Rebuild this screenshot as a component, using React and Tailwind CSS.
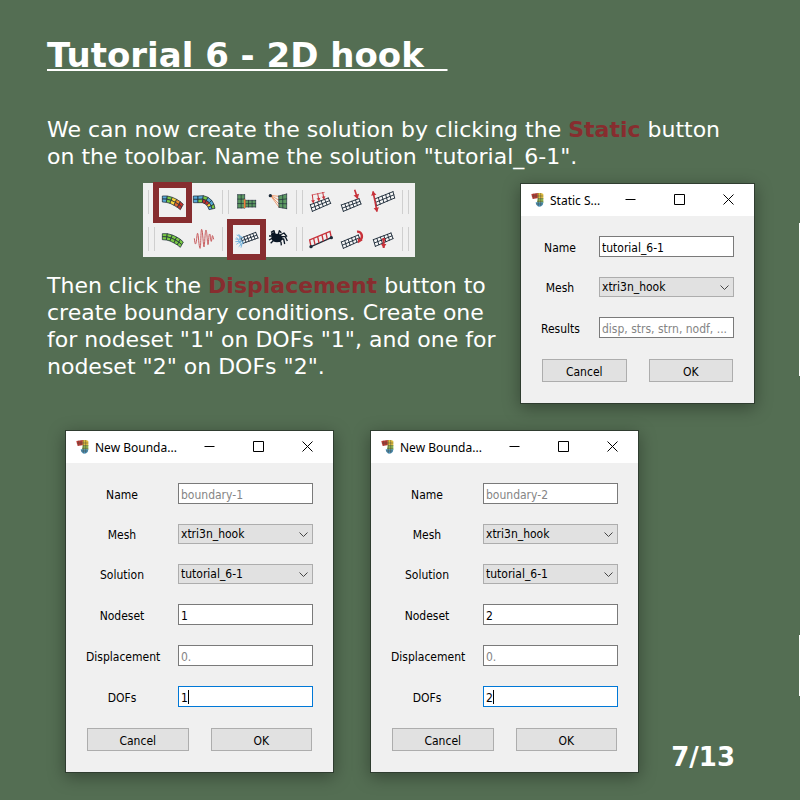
import { useId } from "react";

const INK = "#1c2a38";
const RED = "#c8323a";

const lerp = (a, b, t) => [a[0] + (b[0] - a[0]) * t, a[1] + (b[1] - a[1]) * t];
const pts = (list) => list.map((p) => p.join(",")).join(" ");

// A strip of two rows of cells between an outer and an inner polyline.
function Strip({ top, bottom, upper, lower, dy = 0 }) {
  const mid = top.map((p, i) => lerp(p, bottom[i], 0.5));
  return (
    <g stroke={INK} strokeWidth="2.2" strokeLinejoin="round" transform={`translate(0 ${dy})`}>
      {upper.map((c, i) => (
        <polygon key={"u" + i} fill={c} points={pts([top[i], top[i + 1], mid[i + 1], mid[i]])} />
      ))}
      {lower.map((c, i) => (
        <polygon key={"l" + i} fill={c} points={pts([mid[i], mid[i + 1], bottom[i + 1], bottom[i]])} />
      ))}
    </g>
  );
}

// A wire mesh stretched over four corners: top-left, top-right, bottom-right, bottom-left.
function Mesh({ c, nx, ny, fill = "#f7f7f7", width = 2.8, color = INK }) {
  const lines = [];
  for (let i = 0; i <= nx; i++) lines.push([lerp(c[0], c[1], i / nx), lerp(c[3], c[2], i / nx)]);
  for (let j = 0; j <= ny; j++) lines.push([lerp(c[0], c[3], j / ny), lerp(c[1], c[2], j / ny)]);
  return (
    <g>
      <polygon points={pts(c)} fill={fill} />
      {lines.map(([a, b], i) => (
        <line key={i} x1={a[0]} y1={a[1]} x2={b[0]} y2={b[1]} stroke={color} strokeWidth={width} strokeLinecap="round" />
      ))}
    </g>
  );
}

function Arrow({ from, to, color = RED, width = 3, head = 7 }) {
  const a = Math.atan2(to[1] - from[1], to[0] - from[0]);
  const side = (s) => [to[0] - head * 1.3 * Math.cos(a + s), to[1] - head * 1.3 * Math.sin(a + s)];
  return (
    <g>
      <line x1={from[0]} y1={from[1]} x2={to[0]} y2={to[1]} stroke={color} strokeWidth={width} />
      <polygon points={pts([to, side(0.6), side(-0.6)])} fill={color} />
    </g>
  );
}

const BEAM_TOP = [[67, 54], [82, 54], [97, 58], [110, 64], [121, 71], [130, 79]];
const BEAM_BOTTOM = [[67, 72], [79, 73], [90, 76], [102, 82], [112, 88], [121, 95]];
const GREEN = "#7ac943";
const B = "#56a9d6";
const Y = "#f5d23c";
const R = "#c4332c";

const tools = {
  static: {
    label: "Static",
    box: "48 15 96 111",
    art: <Strip top={BEAM_TOP} bottom={BEAM_BOTTOM} upper={[B, GREEN, Y, "#f08a2c", R]} lower={[B, GREEN, Y, "#e8692c", R]} />,
  },
  nonlinear: {
    label: "Nonlinear",
    box: "144 15 96 111",
    art: (
      <Strip
        top={[[160, 54], [174, 54], [190, 53], [204, 58], [215, 67], [222, 79], [225, 91]]}
        bottom={[[160, 74], [174, 74], [187, 74], [194, 77], [201, 82], [204, 88], [207, 95]]}
        upper={[B, B, GREEN, B, B, GREEN]}
        lower={[B, GREEN, R, R, Y, B]}
      />
    ),
  },
  contact: {
    label: "Contact",
    box: "270 15 96 111",
    art: (
      <g>
        <Mesh c={[[293, 50], [314, 50], [314, 90], [293, 90]]} nx={2} ny={3} fill="#5d9a62" width={2} />
        <Mesh c={[[315, 67], [347, 67], [347, 87], [315, 87]]} nx={3} ny={2} fill="#5d9a62" width={2} />
        <line x1="314" y1="64" x2="314" y2="90" stroke="#ee7d3b" strokeWidth="5" />
      </g>
    ),
  },
  coupling: {
    label: "Coupling",
    box: "366 15 96 111",
    art: (
      <g>
        <g stroke="#ee8a55" strokeWidth="2.4">
          <path d="M391 52 416 55M391 52 416 66M391 52 416 77M391 52 418 89" fill="none" />
        </g>
        <Mesh c={[[416, 54], [440, 48], [440, 92], [417, 88]]} nx={2} ny={3} fill="#5d9a62" width={2} />
        <circle cx="391" cy="53" r="5" fill={INK} />
      </g>
    ),
  },
  pressure: {
    label: "Pressure",
    box: "78 15 96 111",
    art: (
      <g>
        <Mesh c={[[97, 80], [151, 60], [158, 76], [103, 100]]} nx={5} ny={2} />
        <path d="M101 51 140 43" stroke={RED} strokeWidth="2" />
        <Arrow from={[103, 50]} to={[106, 75]} width={3} head={8} />
        <Arrow from={[119, 46]} to={[123, 69]} width={3} head={8} />
        <Arrow from={[134, 42]} to={[138, 64]} width={3} head={8} />
      </g>
    ),
  },
  force: {
    label: "Force",
    box: "174 15 96 111",
    art: (
      <g>
        <Mesh c={[[190, 81], [243, 62], [249, 78], [196, 100]]} nx={5} ny={2} />
        <Arrow from={[230, 35]} to={[239, 62]} width={5} head={12} />
      </g>
    ),
  },
  traction: {
    label: "Traction",
    box: "270 15 96 111",
    art: (
      <g>
        <Mesh c={[[290, 63], [345, 41], [350, 60], [296, 83]]} nx={5} ny={2} />
        <Arrow from={[291, 70]} to={[285, 40]} width={5} head={11} />
        <Arrow from={[291, 70]} to={[297, 101]} width={5} head={11} />
      </g>
    ),
  },
  modal: {
    label: "Modal",
    box: "48 126 96 111",
    art: <Strip top={BEAM_TOP} bottom={BEAM_BOTTOM} dy={113} upper={Array(5).fill(GREEN)} lower={Array(5).fill(GREEN)} />,
  },
  dynamic: {
    label: "Dynamic",
    box: "144 126 96 111",
    art: (
      <path
        d="M163 181C165 200 167 203 169 190S171 165 173 166S177 209 180 211S182 153 185 154S190 207 192 207S195 155 198 156S202 201 204 200S206 167 209 168S212 193 214 190S216 175 217 173S220 180 221 184"
        fill="none"
        stroke="#c85a5c"
        strokeWidth="3"
      />
    ),
  },
  displacement: {
    label: "Displacement",
    box: "270 126 96 111",
    art: (
      <g>
        <Mesh c={[[303, 180], [347, 163], [354, 180], [309, 196]]} nx={5} ny={2} />
        <g stroke="#6db0dc" strokeWidth="2.6" fill="none">
          <path d="M290 171 308 179M286 183 304 184M289 199 307 187M303 209 308 190M297 170 302 195M290 178 304 203" />
          <path d="M296 169 310 183M296 206 312 191M286 191 304 190" />
        </g>
      </g>
    ),
  },
  bodies: {
    label: "Rigid body",
    box: "366 126 96 111",
    art: (
      <g>
        <ellipse cx="411" cy="180" rx="17" ry="13" fill="#0b1725" />
        <ellipse cx="400" cy="169" rx="7" ry="6" fill="#0b1725" />
        <g stroke="#0b1725" strokeWidth="4" fill="none" strokeLinejoin="round">
          <path d="M405 170 402 158 393 163M415 170 418 158 424 164M398 174 387 174M398 180 387 186M402 186 392 196M420 171 432 165 441 176M422 176 436 176 442 189M420 183 431 183 434 198M414 188 423 192 424 202" />
        </g>
      </g>
    ),
  },
  lineLoad: {
    label: "Line load",
    box: "78 126 96 111",
    art: (
      <g>
        <path d="M99 206 160 179" stroke={INK} strokeWidth="4" />
        <path d="M99 206 95 186 156 160 160 179M111 200 107 181M123 195 119 176M136 190 132 171M148 184 144 165" stroke={RED} strokeWidth="4" fill="none" />
        <circle cx="99" cy="206" r="5" fill={INK} />
        <circle cx="160" cy="179" r="5" fill={INK} />
      </g>
    ),
  },
  moment: {
    label: "Moment",
    box: "174 126 96 111",
    art: (
      <g>
        <Mesh c={[[190, 192], [241, 171], [247, 188], [196, 211]]} nx={5} ny={2} />
        <path d="M237 161C252 160 256 177 247 187" fill="none" stroke={RED} strokeWidth="7" />
        <polygon points="239,180 254,187 240,196" fill={RED} />
      </g>
    ),
  },
  gravity: {
    label: "Gravity",
    box: "270 126 96 111",
    art: (
      <g>
        <Mesh c={[[286, 185], [339, 165], [345, 182], [292, 205]]} nx={5} ny={2} />
        <circle cx="317" cy="184" r="5" fill={RED} />
        <Arrow from={[317, 182]} to={[317, 210]} width={6} head={11} />
      </g>
    ),
  },
};

function Tool({ name, marked = false }) {
  const { label, box, art } = tools[name];
  return (
    <button type="button" aria-label={label} className="relative h-[37px] w-8">
      <svg viewBox={box} className="block h-[37px] w-8" aria-hidden="true">
        {art}
      </svg>
      {marked && <span className="absolute -top-px -right-1 -bottom-[3px] -left-[3px] border-[6px] border-[#872d2f]" />}
    </button>
  );
}

function Divider() {
  return <span className="mr-px ml-0.5 h-6 w-[7px] border-x border-[#cfcfcf]" />;
}

function ToolRow({ groups, marked }) {
  return (
    <div className="flex items-center">
      <Divider />
      {groups.map((group) => (
        <div key={group[0]} className="flex items-center">
          {group.map((name) => (
            <Tool key={name} name={name} marked={name === marked} />
          ))}
          <Divider />
        </div>
      ))}
    </div>
  );
}

function HookLogo() {
  return (
    <svg viewBox="62 57 39 42" className="h-[14px] w-[13px] shrink-0" aria-hidden="true">
      <path d="M63 60 83 57 83 72 67 75Z" fill="#c03a34" />
      <path d="M82 58Q90 55 99 60L99 74 82 74Z" fill="#e0bd3c" />
      <path d="M82 73H99V87H80Z" fill="#8fb84e" />
      <path d="M76 85 99 85Q98 98 87 98 77 97 76 85Z" fill="#4a93bd" />
      <path d="M64 66 99 66M82 74H99M80 82H99M77 90H97M70 59V74M77 58V73M84 57V97M91 57V97" stroke="#4b4a3c" strokeWidth="1.4" />
    </svg>
  );
}

function CaptionButton({ label, children }) {
  return (
    <button type="button" aria-label={label} className="flex w-[49px] items-center justify-center pr-0.5 pb-px">
      <svg viewBox="0 0 11 11" className="size-[11px]" fill="none" stroke="#000" aria-hidden="true">
        {children}
      </svg>
    </button>
  );
}

function Field({ label, kind = "text", value, placeholder, focused = false }) {
  const id = useId();
  return (
    <>
      <label htmlFor={id} className="pt-0.5 text-center">
        {label}
      </label>
      {kind === "select" ? (
        <div className="relative">
          <select id={id} defaultValue={value} className="block h-5 w-full appearance-none border border-[#adadad] bg-[#e1e1e1] px-0.5 outline-none">
            <option>{value}</option>
          </select>
          <svg viewBox="0 0 9 6" className="pointer-events-none absolute top-2 right-[5px] h-[6px] w-[9px]" fill="none" stroke="#444" aria-hidden="true">
            <path d="M0.5 0.5 4.5 4.5 8.5 0.5" />
          </svg>
        </div>
      ) : (
        <div className="relative">
          <input
            id={id}
            type="text"
            defaultValue={value}
            placeholder={placeholder}
            className={
              "block h-[21px] w-full border bg-white px-0.5 pt-0.5 outline-none placeholder:text-[#858585] " +
              (focused ? "border-[#0078d7]" : "border-[#7a7a7a]")
            }
          />
          {focused && <span className="absolute top-1 left-[10px] h-[14px] w-px bg-black" />}
        </div>
      )}
    </>
  );
}

function Dialog({ title, labelColumn, fields }) {
  return (
    <section className="shrink-0 border border-[#2f3d30] bg-[#f0f0f0] font-['DejaVu_Sans_Condensed','DejaVu_Sans',sans-serif] text-[12px] leading-4 text-black shadow-[0_4px_16px_rgba(0,0,0,0.35)]">
      <header className="flex h-8 bg-white">
        <div className="flex flex-1 items-center gap-1.5 pl-2.5">
          <HookLogo />
          <h2 className="pt-0.5 font-['Noto_Sans',sans-serif] text-[12px] whitespace-nowrap">{title}</h2>
        </div>
        <CaptionButton label="Minimize">
          <path d="M0.5 5.5H10.5" />
        </CaptionButton>
        <CaptionButton label="Maximize">
          <path d="M0.5 0.5H10.5V10.5H0.5Z" />
        </CaptionButton>
        <CaptionButton label="Close">
          <path d="M0.5 0.5 10.5 10.5M10.5 0.5 0.5 10.5" />
        </CaptionButton>
      </header>
      <form className="p-5" onSubmit={(e) => e.preventDefault()}>
        <div className={"grid items-center gap-5 " + labelColumn}>
          {fields.map((f) => (
            <Field key={f.label} {...f} />
          ))}
        </div>
        <div className="mx-px mt-[21px] mb-px grid grid-cols-2 gap-[22px]">
          <button type="button" className="h-[23px] border border-[#adadad] bg-[#e1e1e1] pt-0.5">
            Cancel
          </button>
          <button type="submit" className="h-[23px] border border-[#adadad] bg-[#e1e1e1] pt-0.5">
            OK
          </button>
        </div>
      </form>
    </section>
  );
}

const boundaryFields = (n) => [
  { label: "Name", placeholder: "boundary-" + n },
  { label: "Mesh", kind: "select", value: "xtri3n_hook" },
  { label: "Solution", kind: "select", value: "tutorial_6-1" },
  { label: "Nodeset", value: n },
  { label: "Displacement", placeholder: "0." },
  { label: "DOFs", value: n, focused: true },
];

export default function App() {
  return (
    <main className="relative min-h-screen overflow-hidden bg-[#546e53] pt-[35px] pr-[45px] pb-[27px] pl-[47px] font-['DejaVu_Sans',sans-serif] text-[22px] leading-[27px] text-white">
      <h1 className="text-[34px] leading-10 font-bold whitespace-pre underline decoration-2 underline-offset-2">{"Tutorial 6 - 2D hook  "}</h1>

      <p className="mt-[41px]">
        We can now create the solution by clicking the <strong className="text-[#872d2f]">Static</strong> button
        <br />
        on the toolbar. Name the solution "tutorial_6-1".
      </p>

      <div className="mt-[13px] flex items-start gap-2.5">
        <div className="flex-1">
          <div role="toolbar" aria-label="Analysis" className="mx-auto w-[272px] bg-[#f0f0f0] pl-[3px]">
            <ToolRow
              marked="static"
              groups={[
                ["static", "nonlinear"],
                ["contact", "coupling"],
                ["pressure", "force", "traction"],
              ]}
            />
            <ToolRow
              marked="displacement"
              groups={[
                ["modal", "dynamic"],
                ["displacement", "bodies"],
                ["lineLoad", "moment", "gravity"],
              ]}
            />
          </div>
          <p className="mt-[15px]">
            Then click the <strong className="text-[#872d2f]">Displacement</strong> button to
            <br />
            create boundary conditions. Create one for nodeset "1" on DOFs "1", and one for nodeset "2" on DOFs "2".
          </p>
        </div>
        <Dialog
          title="Static S..."
          labelColumn="grid-cols-[38px_135px]"
          fields={[
            { label: "Name", value: "tutorial_6-1" },
            { label: "Mesh", kind: "select", value: "xtri3n_hook" },
            { label: "Results", placeholder: "disp, strs, strn, nodf, ..." },
          ]}
        />
      </div>

      <div className="mt-[26px] flex items-end gap-8 pl-[18px]">
        <div className="flex gap-9">
          <Dialog title="New Bounda..." labelColumn="grid-cols-[72px_135px]" fields={boundaryFields("1")} />
          <Dialog title="New Bounda..." labelColumn="grid-cols-[72px_135px]" fields={boundaryFields("2")} />
        </div>
        <p className="mr-5 ml-auto text-[26px] leading-8 font-bold">7/13</p>
      </div>

      <span className="absolute top-[223px] right-0 h-[153px] w-px bg-white" />
      <span className="absolute top-[635px] right-0 h-[61px] w-px bg-white" />
    </main>
  );
}
